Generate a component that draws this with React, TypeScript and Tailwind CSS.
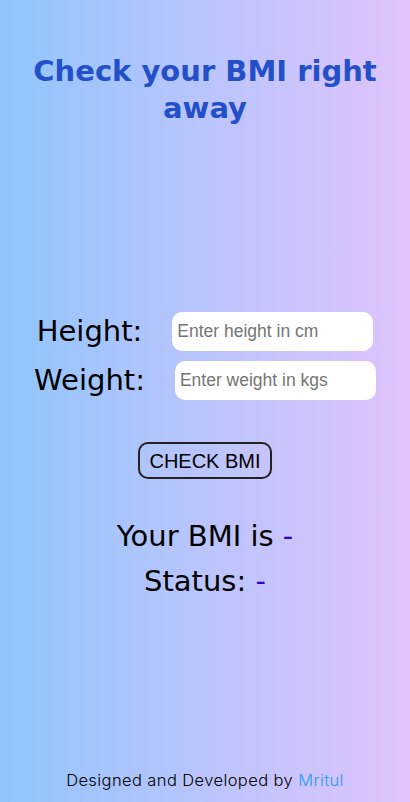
import React, { useState } from 'react';

const App: React.FC = () => {
  const [height, setHeight] = useState('');
  const [weight, setWeight] = useState('');
  const [bmi, setBmi] = useState('-');
  const [status, setStatus] = useState('-');

  const check = () => {
    const h = parseFloat(height) / 100;
    const w = parseFloat(weight);
    if (!h || !w) return;
    const v = w / (h * h);
    setBmi(v.toFixed(1));
    setStatus(v < 18.5 ? 'Underweight' : v < 25 ? 'Normal' : v < 30 ? 'Overweight' : 'Obese');
  };

  return (
    <div className="h-[802px] flex flex-col items-center bg-gradient-to-r from-[#8ec5fc] to-[#e0c3fc] font-['DejaVu_Sans',sans-serif]">
      <h1 className="pt-[53px] px-6 text-center text-[29px] leading-[37px] font-bold text-[#2350c8]">
        Check your BMI right away
      </h1>

      <div className="mt-[185px] flex flex-col gap-[10px]">
        <div className="flex items-center justify-center gap-[30px]">
          <label className="text-[29px] leading-[39px] text-black">Height:</label>
          <input
            value={height}
            onChange={(e) => setHeight(e.target.value)}
            placeholder="Enter height in cm"
            className="w-[201px] h-[39px] rounded-[10px] bg-white px-[5px] text-[17.5px] font-['Liberation_Sans',sans-serif] placeholder:text-[#757575] outline-none"
          />
        </div>
        <div className="flex items-center justify-center gap-[30px]">
          <label className="text-[29px] leading-[39px] text-black">Weight:</label>
          <input
            value={weight}
            onChange={(e) => setWeight(e.target.value)}
            placeholder="Enter weight in kgs"
            className="w-[201px] h-[39px] rounded-[10px] bg-white px-[5px] text-[17.5px] font-['Liberation_Sans',sans-serif] placeholder:text-[#757575] outline-none"
          />
        </div>
      </div>

      <button
        onClick={check}
        className="mt-[42px] w-[134px] h-[37px] rounded-[10px] border-2 border-[#222] text-[20px] font-['Liberation_Sans',sans-serif] text-black"
      >
        CHECK BMI
      </button>

      <div className="mt-[35px] text-center text-[29px] leading-[45px] text-black">
        <p>Your BMI is <span className="text-[#3300cc]">{bmi}</span></p>
        <p>Status: <span className="text-[#3300cc]">{status}</span></p>
      </div>

      <p className="mt-auto mb-[9px] text-[16.5px] tracking-[0.4px] font-['Inter',sans-serif] font-light text-black">
        Designed and Developed by <span className="text-[#2b9bf0]">Mritul</span>
      </p>
    </div>
  );
};

export default App;
